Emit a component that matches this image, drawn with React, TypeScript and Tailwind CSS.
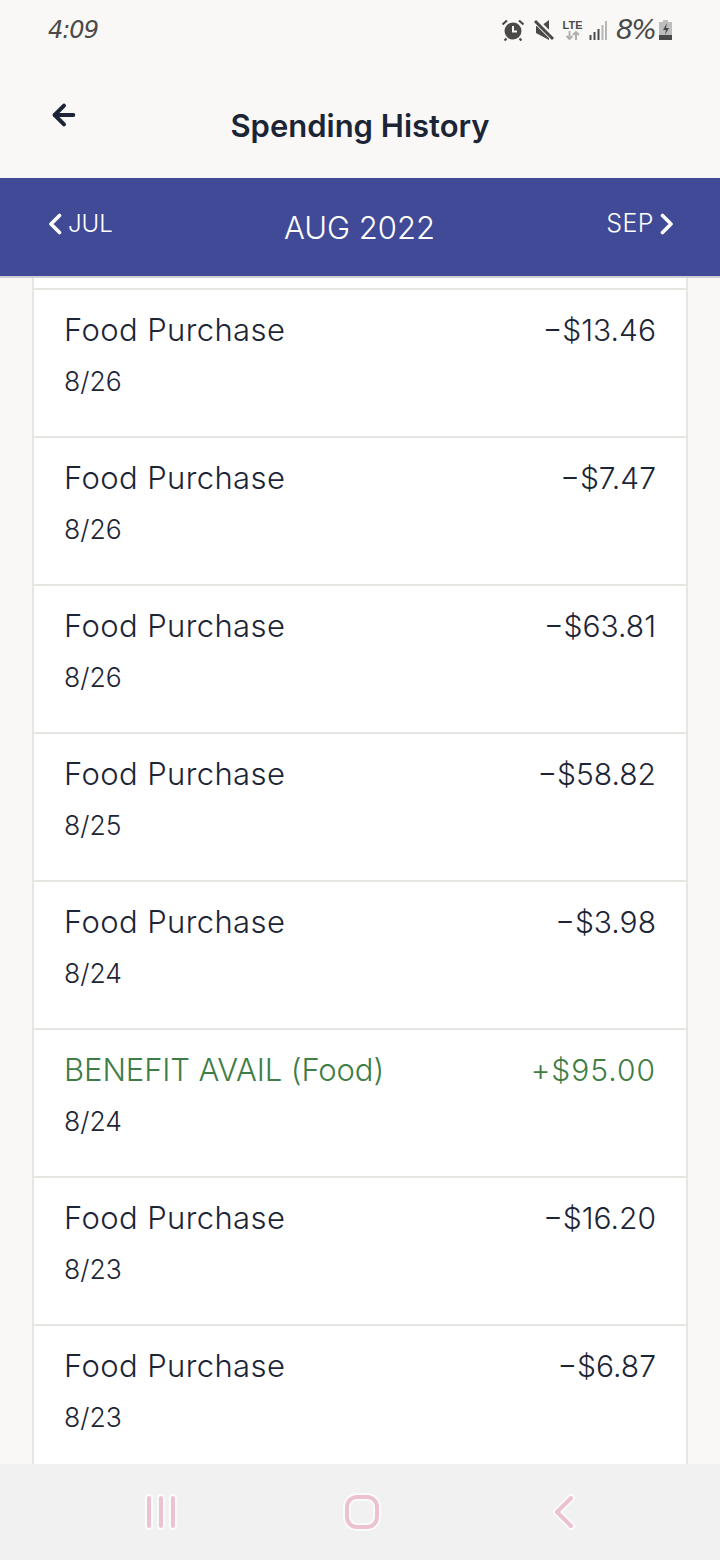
import { ArrowLeft } from "lucide-react";

const rows = [
  { label: "Food Purchase", date: "8/26", amount: "−$13.46" },
  { label: "Food Purchase", date: "8/26", amount: "−$7.47" },
  { label: "Food Purchase", date: "8/26", amount: "−$63.81" },
  { label: "Food Purchase", date: "8/25", amount: "−$58.82" },
  { label: "Food Purchase", date: "8/24", amount: "−$3.98" },
  { label: "BENEFIT AVAIL (Food)", date: "8/24", amount: "+$95.00", credit: true },
  { label: "Food Purchase", date: "8/23", amount: "−$16.20" },
  { label: "Food Purchase", date: "8/23", amount: "−$6.87" },
];

function StatusIcons() {
  return (
    <div className="flex items-center text-[#4a4a4a]">
      {/* alarm */}
      <svg width="24" height="24" viewBox="0 0 24 24" fill="none" className="mr-[8px]">
        <circle cx="12" cy="13" r="8.500" fill="#4a4a4a" />
        <path d="M12 8v5.500h4" stroke="#f9f8f6" strokeWidth="2" />
        <path d="M1.500 6.500l4.500-4M22.500 6.500l-4.500-4M5.500 20.500l-2 2M18.500 20.500l2 2" stroke="#4a4a4a" strokeWidth="2.200" />
      </svg>
      {/* muted speaker */}
      <svg width="22" height="22" viewBox="0 0 22 22" fill="none" className="mr-[7px]">
        <path d="M3 7h5l8-6v20L3 14z" fill="#4a4a4a" />
        <path d="M2 1l19 19" stroke="#f9f8f6" strokeWidth="6" />
        <path d="M2 2l18 18" stroke="#4a4a4a" strokeWidth="3" />
      </svg>
      {/* LTE */}
      <div className="mr-[6px] flex w-[21px] flex-col items-center">
        <span className="text-[11px] font-bold leading-[11px] [font-family:'Liberation_Sans',sans-serif]">LTE</span>
        <svg width="16" height="9" viewBox="0 0 16 9" fill="none">
          <path d="M4.500 0v8M1.500 5l3 3 3-3" stroke="#b0b0b0" strokeWidth="2" />
          <path d="M11 9V1M8 4l3-3 3 3" stroke="#b0b0b0" strokeWidth="2" />
        </svg>
      </div>
      {/* signal */}
      <svg width="18" height="20" viewBox="0 0 18 20" fill="none" className="mr-[9px]">
        <path d="M1.500 15v5M5.500 12v8M9.500 9v11" stroke="#4a4a4a" strokeWidth="2" />
        <path d="M13.500 5v15M17 1v19" stroke="#b5b5b5" strokeWidth="2" />
      </svg>
      <span className="mr-[5px] w-[38px] whitespace-nowrap text-[27px] italic leading-[24px] tracking-[-2px] text-[#4a4a4a] [font-family:'DejaVu_Sans',sans-serif]">8%</span>
      {/* battery */}
      <svg width="13" height="20" viewBox="0 0 13 20">
        <path d="M4 0h5v2h4v18H0V2h4z" fill="#bdbdbd" />
        <path d="M0 15h13v5H0z" fill="#4a4a4a" />
        <path d="M8 3l-4 7h3l-1 5 4-7H7z" fill="#4a4a4a" />
      </svg>
    </div>
  );
}

export default function App() {
  return (
    <div className="flex h-[1560px] w-[720px] flex-col overflow-hidden bg-[#f9f8f6] text-[#1c2536] [font-family:Inter,sans-serif]">
      {/* Status bar */}
      <div className="flex h-[60px] shrink-0 items-center justify-between pl-[48px] pr-[48px]">
        <span className="text-[24px] italic leading-none tracking-[-1px] text-[#4a4a4a] [font-family:'DejaVu_Sans',sans-serif]">4:09</span>
        <StatusIcons />
      </div>

      {/* Title */}
      <header className="relative flex h-[118px] shrink-0 items-center justify-center pt-[12px]">
        <ArrowLeft className="absolute left-[48px] top-[39px] h-[32px] w-[32px]" strokeWidth={3} />
        <h1 className="text-[31px] font-semibold leading-none">Spending History</h1>
      </header>

      {/* Month switcher */}
      <nav className="flex h-[100px] shrink-0 items-center justify-between border-b-2 border-[#cfcfd6] bg-[#404a96] pl-[48px] pr-[46px] font-light text-white">
        <div className="flex items-center gap-[6px] pb-[6px] text-[24px]">
          <svg width="14" height="22" viewBox="0 0 14 22" fill="none">
            <path d="M11.500 2.500L3 11l8.500 8.500" stroke="#fff" strokeWidth="3.600" strokeLinecap="round" strokeLinejoin="round" />
          </svg>
          JUL
        </div>
        <span className="mt-[2px] text-[31px]">AUG 2022</span>
        <div className="flex items-center gap-[6px] pb-[6px] text-[25px] tracking-[0.5px]">
          SEP
          <svg width="14" height="22" viewBox="0 0 14 22" fill="none">
            <path d="M2.500 2.500L11 11l-8.500 8.500" stroke="#fff" strokeWidth="3.600" strokeLinecap="round" strokeLinejoin="round" />
          </svg>
        </div>
      </nav>

      {/* Transactions */}
      <main className="min-h-0 flex-1 overflow-hidden px-[32px] font-light">
        <div className="border-x-2 border-[#e6e5e1] bg-white">
          <div className="h-[12px] border-b-2 border-[#e6e5e1]" />
          {rows.map((row, i) => (
            <div key={i} className="flex h-[148px] justify-between border-b-2 border-[#e6e5e1] pl-[30px] pr-[30px] pt-[22px]">
              <div>
                <div className={`text-[31px] leading-[36px] ${row.credit ? "tracking-[-0.1px] text-[#3f7d46]" : "tracking-[0.4px]"}`}>{row.label}</div>
                <div className="mt-[17px] text-[26.500px] leading-[32px]">{row.date}</div>
              </div>
              <div className={`text-[30px] leading-[36px] ${row.credit ? "tracking-[1px] text-[#3f7d46]" : ""}`}>{row.amount}</div>
            </div>
          ))}
        </div>
      </main>

      {/* Android nav bar */}
      <footer className="flex h-[96px] shrink-0 items-center justify-between bg-[#f1f1f1] px-[144px]">
        <svg width="34" height="36" viewBox="0 0 34 36" fill="none">
          <path d="M5 4v28M17 4v28M29 4v28" stroke="#ffffff" strokeWidth="8" strokeLinecap="round" opacity="0.7" />
          <path d="M5 4v28M17 4v28M29 4v28" stroke="#edc2d0" strokeWidth="4" strokeLinecap="round" />
        </svg>
        <svg width="38" height="38" viewBox="0 0 38 38" fill="none" className="mr-[6px]">
          <rect x="4" y="4" width="30" height="30" rx="10" stroke="#ffffff" strokeWidth="8" opacity="0.7" />
          <rect x="4" y="4" width="30" height="30" rx="10" stroke="#edc2d0" strokeWidth="4" />
        </svg>
        <svg width="24" height="36" viewBox="0 0 24 36" fill="none">
          <path d="M19 4L5 18l14 14" stroke="#ffffff" strokeWidth="8" strokeLinecap="round" strokeLinejoin="round" opacity="0.7" />
          <path d="M19 4L5 18l14 14" stroke="#edc2d0" strokeWidth="4" strokeLinecap="round" strokeLinejoin="round" />
        </svg>
      </footer>
    </div>
  );
}
